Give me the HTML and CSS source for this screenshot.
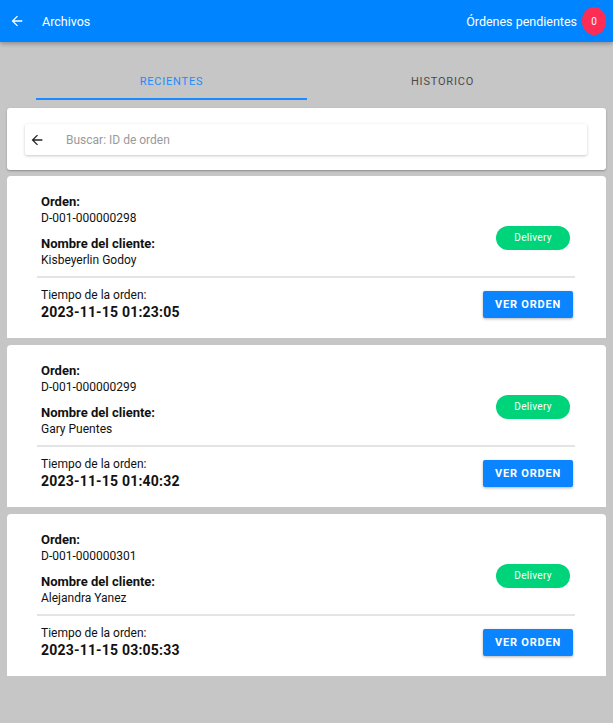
FILE: index.html
```html
<!DOCTYPE html>
<html lang="es">
<head>
<meta charset="utf-8">
<title>Archivos</title>
<link rel="stylesheet" href="styles.css">
</head>
<body>
<header class="topbar">
  <div class="topbar-left">
    <svg class="back-icon" width="16" height="16" viewBox="0 0 24 24"><path d="M20 11H7.83l5.59-5.59L12 4l-8 8 8 8 1.41-1.41L7.83 13H20v-2z" fill="#fff"/></svg>
    <span class="topbar-title">Archivos</span>
  </div>
  <div class="topbar-right">
    <span class="pending-label">Órdenes pendientes</span>
    <span class="badge">0</span>
  </div>
</header>

<nav class="tabs">
  <div class="tab tab-active">RECIENTES</div>
  <div class="tab">HISTORICO</div>
</nav>

<section class="search-card">
  <div class="search-bar">
    <svg class="search-back" width="16" height="16" viewBox="0 0 24 24"><path d="M20 11H7.83l5.59-5.59L12 4l-8 8 8 8 1.41-1.41L7.83 13H20v-2z" fill="#222"/></svg>
    <span class="search-placeholder">Buscar: ID de orden</span>
  </div>
</section>

<main class="orders">
  <article class="order-card">
    <div class="order-top">
      <div class="order-info">
        <div class="label">Orden:</div>
        <div class="value">D-001-000000298</div>
        <div class="label label-gap">Nombre del cliente:</div>
        <div class="value">Kisbeyerlin Godoy</div>
      </div>
      <span class="pill">Delivery</span>
    </div>
    <div class="order-bottom">
      <div class="time-info">
        <div class="value">Tiempo de la orden:</div>
        <div class="time">2023-11-15 01:23:05</div>
      </div>
      <button class="btn">VER ORDEN</button>
    </div>
  </article>

  <article class="order-card">
    <div class="order-top">
      <div class="order-info">
        <div class="label">Orden:</div>
        <div class="value">D-001-000000299</div>
        <div class="label label-gap">Nombre del cliente:</div>
        <div class="value">Gary Puentes</div>
      </div>
      <span class="pill">Delivery</span>
    </div>
    <div class="order-bottom">
      <div class="time-info">
        <div class="value">Tiempo de la orden:</div>
        <div class="time">2023-11-15 01:40:32</div>
      </div>
      <button class="btn">VER ORDEN</button>
    </div>
  </article>

  <article class="order-card">
    <div class="order-top">
      <div class="order-info">
        <div class="label">Orden:</div>
        <div class="value">D-001-000000301</div>
        <div class="label label-gap">Nombre del cliente:</div>
        <div class="value">Alejandra Yanez</div>
      </div>
      <span class="pill">Delivery</span>
    </div>
    <div class="order-bottom">
      <div class="time-info">
        <div class="value">Tiempo de la orden:</div>
        <div class="time">2023-11-15 03:05:33</div>
      </div>
      <button class="btn">VER ORDEN</button>
    </div>
  </article>
</main>
</body>
</html>
```

FILE: styles.css
```css
* { box-sizing: border-box; }
html, body {
  margin: 0;
  padding: 0;
  background: #c6c6c6;
  font-family: Roboto, "Liberation Sans", Arial, sans-serif;
  color: #111;
}
body { min-height: 723px; }

.topbar {
  height: 42px;
  background: #0084ff;
  display: flex;
  align-items: center;
  justify-content: space-between;
  padding: 0 7px 0 9px;
  box-shadow: 0 2px 4px rgba(0,0,0,0.28);
  color: #fff;
}
.topbar-left { display: flex; align-items: center; }
.back-icon { display: block; }
.topbar-title { font-size: 12.5px; margin-left: 17px; }
.topbar-right { display: flex; align-items: center; }
.pending-label { font-size: 12.5px; margin-right: 5px; }
.badge {
  width: 24px;
  height: 28px;
  border-radius: 50%;
  background: #ff2d55;
  color: #fff;
  font-size: 10px;
  display: flex;
  align-items: center;
  justify-content: center;
}

.tabs {
  display: flex;
  margin: 23px 35px 0 36px;
}
.tab {
  flex: 1;
  height: 35px;
  display: flex;
  align-items: center;
  justify-content: center;
  font-size: 11px;
  font-weight: 400;
  letter-spacing: 0.8px;
  color: #4a4a4a;
  border-bottom: 2px solid transparent;
}
.tab-active {
  color: #1a8cff;
  border-bottom-color: #1a8cff;
}

.search-card {
  margin: 8px 7px 0 7px;
  background: #fff;
  border-radius: 3px;
  padding: 16px 19px 15px 18px;
  box-shadow: 0 1px 2px rgba(0,0,0,0.3);
}
.search-bar {
  height: 31px;
  display: flex;
  align-items: center;
  background: #fff;
  box-shadow: 0 1px 3px rgba(0,0,0,0.22);
  border-radius: 2px;
  padding-left: 4px;
}
.search-back { display: block; }
.search-placeholder {
  margin-left: 21px;
  font-size: 12px;
  color: #9a9a9a;
}

.orders {
  display: flex;
  flex-direction: column;
  gap: 7px;
  margin: 6px 7px 0 7px;
}
.order-card {
  background: #fff;
  border-radius: 4px 4px 0 0;
  padding: 18px 31px 17px 30px;
}
.order-top {
  display: flex;
  align-items: center;
  justify-content: space-between;
  padding: 0 5px 8px 4px;
  border-bottom: 2px solid #e4e4e4;
}
.label {
  font-size: 13px;
  line-height: 16px;
  font-weight: 700;
}
.label-gap { margin-top: 10px; }
.value {
  font-size: 12px;
  line-height: 16px;
}
.pill {
  margin-top: 13px;
  width: 74px;
  height: 24px;
  border-radius: 12px;
  background: #00d47a;
  color: #fff;
  font-size: 10px;
  letter-spacing: 0.3px;
  display: flex;
  align-items: center;
  justify-content: center;
}
.order-bottom {
  display: flex;
  align-items: center;
  justify-content: space-between;
  padding: 9px 2px 0 4px;
}
.time {
  font-size: 14px;
  line-height: 18px;
  font-weight: 700;
  letter-spacing: 0.2px;
}
.btn {
  width: 90px;
  height: 27px;
  border: none;
  border-radius: 2px;
  background: #0a84ff;
  color: #fff;
  font-family: inherit;
  font-size: 11px;
  font-weight: 700;
  letter-spacing: 0.8px;
  box-shadow: 0 1px 3px rgba(0,0,0,0.3);
  padding: 0;
}
```
